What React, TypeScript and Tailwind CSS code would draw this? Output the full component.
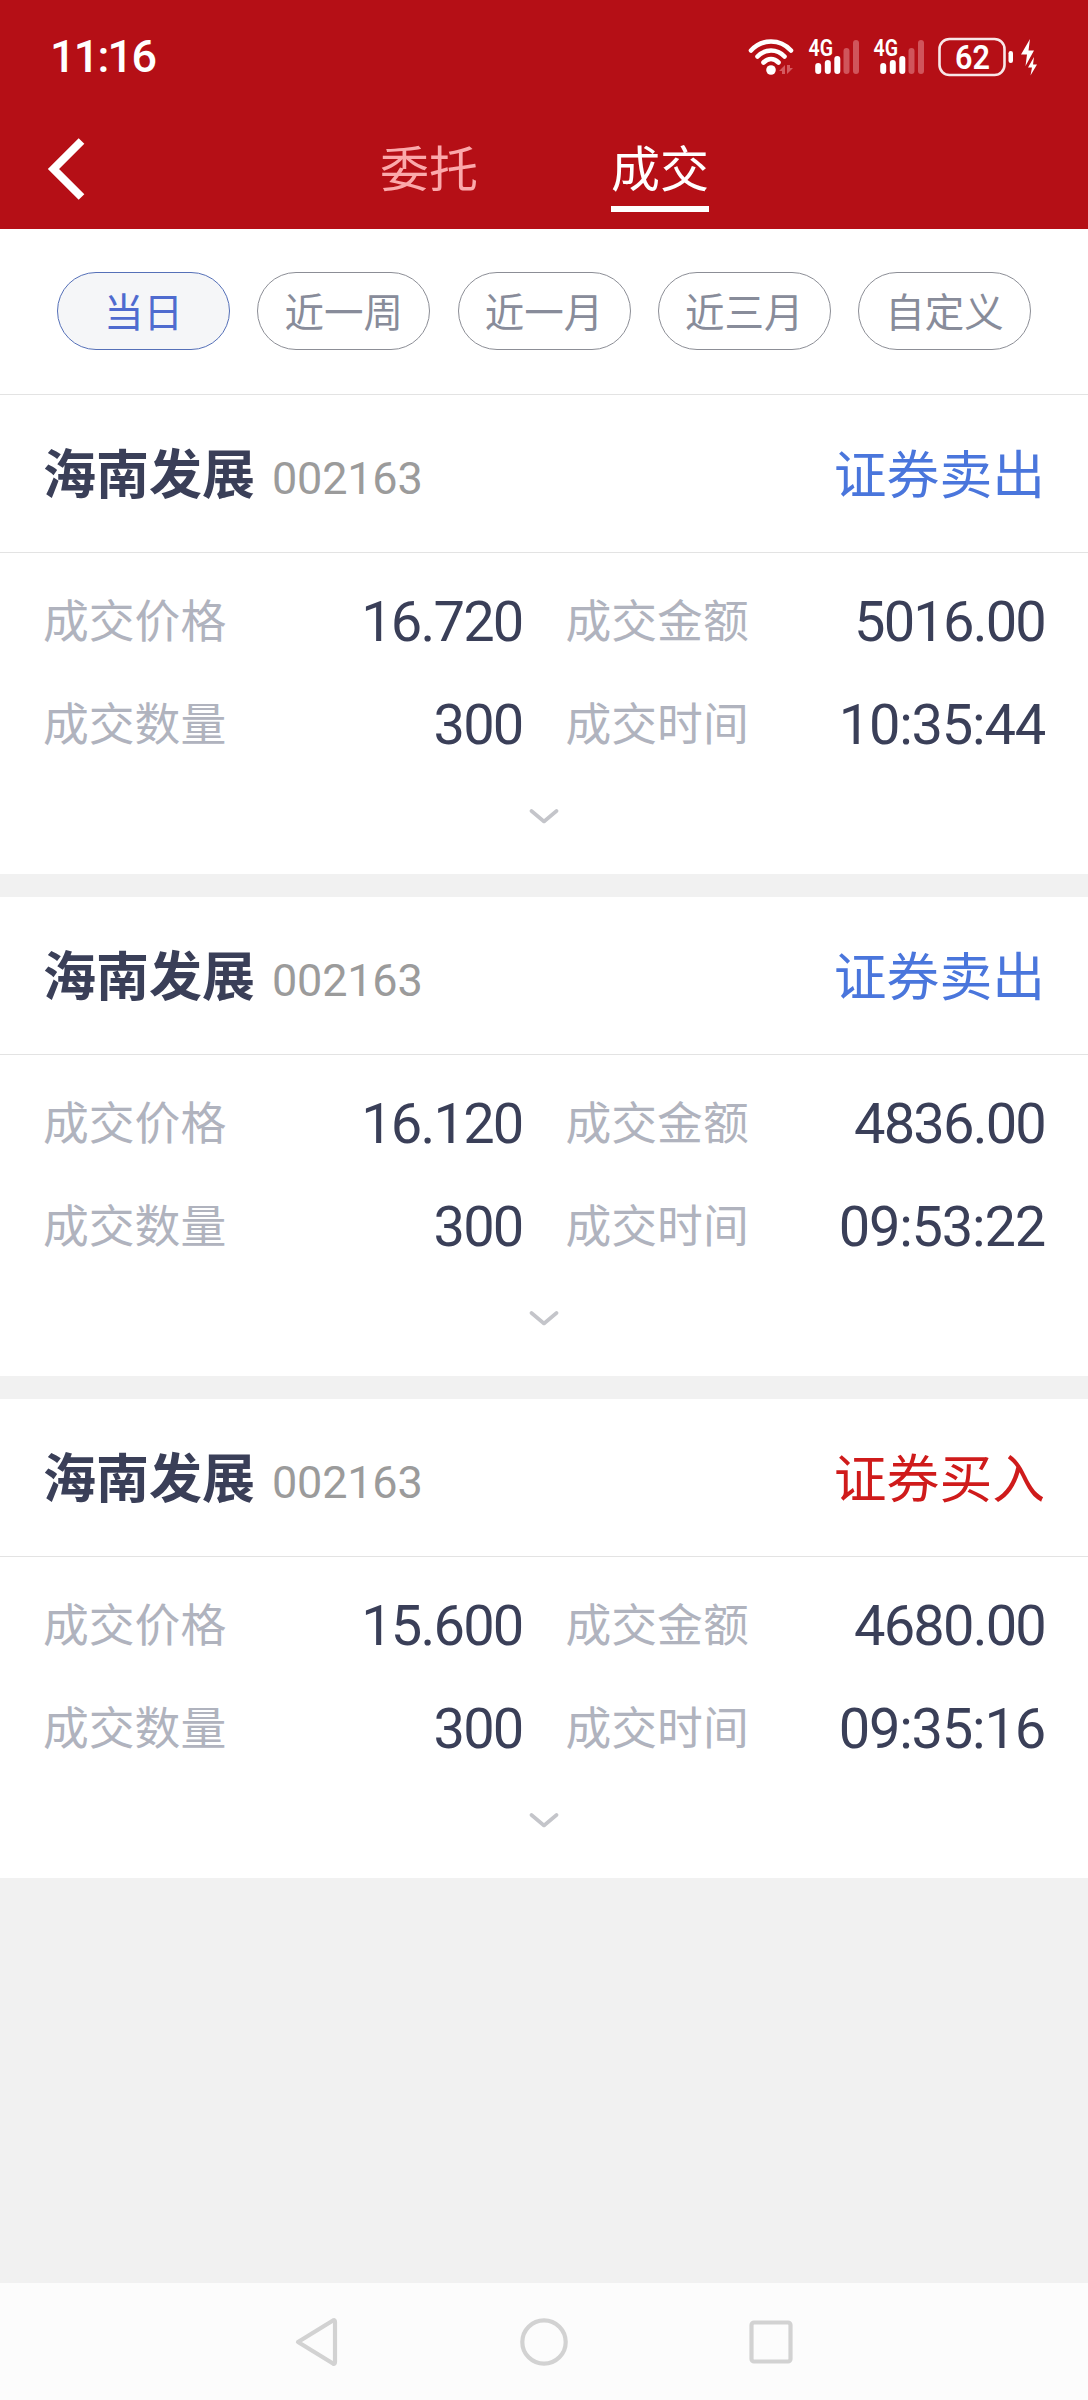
import { clsx } from 'clsx'
import { useState } from 'react'

type Deal = {
  id: number
  name: string
  code: string
  side: 'buy' | 'sell'
  price: string
  amount: string
  quantity: string
  time: string
}

const RANGES = ['当日', '近一周', '近一月', '近三月', '自定义']

const DEALS: Deal[] = [
  { id: 1, name: '海南发展', code: '002163', side: 'sell', price: '16.720', amount: '5016.00', quantity: '300', time: '10:35:44' },
  { id: 2, name: '海南发展', code: '002163', side: 'sell', price: '16.120', amount: '4836.00', quantity: '300', time: '09:53:22' },
  { id: 3, name: '海南发展', code: '002163', side: 'buy', price: '15.600', amount: '4680.00', quantity: '300', time: '09:35:16' },
]

function WifiIcon() {
  return (
    <svg width="46" height="38" viewBox="0 0 46 38" fill="none" stroke="#fff" strokeWidth="4.600" strokeLinecap="round">
      <path d="M3 12.500C14 0.500 32 0.500 43 12.500" />
      <path d="M9.500 18.500C17 10.500 29 10.500 36.500 18.500" />
      <path d="M15.500 24.500C20 20 26 20 30.500 24.500" />
      <circle cx="23" cy="32" r="4.800" fill="#fff" stroke="none" />
      <path d="M31 33l6-6v9h-3v-3zM45 30l-6 6v-9h3v3z" fill="#d45a60" stroke="none" />
    </svg>
  )
}

function SignalIcon() {
  return (
    <svg width="52" height="54" viewBox="0 -8 52 54">
      <text x="0.500" y="18" fill="#fff" fontSize="24" fontWeight="600" textLength="24.500" lengthAdjust="spacingAndGlyphs">4G</text>
      <g strokeWidth="6" strokeLinecap="round" stroke="#fff">
        <path d="M10.200 28v5" />
        <path d="M19.800 25v8" />
        <path d="M29.300 21v12" />
        <g stroke="#d0555b">
          <path d="M38.500 13v20" />
          <path d="M48 5v28" />
        </g>
      </g>
    </svg>
  )
}

function BatteryIcon() {
  return (
    <svg width="100" height="40" viewBox="0 0 100 40">
      <rect x="1.500" y="2" width="65" height="36" rx="10" fill="none" stroke="#fff" strokeOpacity=".9" strokeWidth="2.600" />
      <text x="34.500" y="31.500" fill="#fff" fontSize="33" fontWeight="600" textAnchor="middle" textLength="35" lengthAdjust="spacingAndGlyphs">62</text>
      <rect x="70.500" y="14" width="4.500" height="12" rx="2.200" fill="#fff" />
      <path d="M92 2L83 17.500h6L87.500 29 96 13.500h-5.500z" fill="#fff" />
      <path d="M96 20l-6 10.500h4L92.500 38.500 99 27.500h-4z" fill="#fff" />
    </svg>
  )
}

function StatusBar() {
  return (
    <div className="flex h-[110px] items-center justify-between pl-[50px] pr-[50px] pt-[3px]">
      <span className="text-[45px] font-medium leading-none tracking-[-1.800px] text-white">11:16</span>
      <div className="flex items-center">
        <WifiIcon />
        <div className="ml-[14px]"><SignalIcon /></div>
        <div className="ml-[13px]"><SignalIcon /></div>
        <div className="ml-[13px]"><BatteryIcon /></div>
      </div>
    </div>
  )
}

function Field({ label, value }: { label: string; value: string }) {
  return (
    <div className="flex h-[103px] items-center justify-between">
      <span className="pt-[3px] text-[45.800px] leading-none text-[#b0b3be]">{label}</span>
      <span className={clsx('text-[56px] leading-none text-[#3a3f58]', value.includes(':') ? 'tracking-[-1.200px]' : 'tracking-[-1.800px]')}>
        {value}
      </span>
    </div>
  )
}

function DealCard({ deal }: { deal: Deal }) {
  return (
    <div className="h-[479px] bg-white">
      <div className="flex h-[158px] items-center justify-between border-b border-[#e3e3e3] px-[43px] pt-[5px]">
        <div className="flex items-baseline">
          <span className="text-[53px] font-bold leading-none text-[#3a3f58]">{deal.name}</span>
          <span className="ml-[17px] text-[45px] leading-none tracking-[-0.200px] text-[#9b9b9b]">{deal.code}</span>
        </div>
        <span className={clsx('text-[52.800px] leading-none', deal.side === 'sell' ? 'text-[#4a76dc]' : 'text-[#cf1b1b]')}>
          {deal.side === 'sell' ? '证券卖出' : '证券买入'}
        </span>
      </div>

      <div className="grid grid-cols-2 gap-x-[43px] px-[43px] pt-[17px]">
        <Field label="成交价格" value={deal.price} />
        <Field label="成交金额" value={deal.amount} />
        <Field label="成交数量" value={deal.quantity} />
        <Field label="成交时间" value={deal.time} />
      </div>

      {/* Expand */}
      <div className="flex justify-center pt-[32px]">
        <svg width="30" height="18" viewBox="0 0 30 18" fill="none" stroke="#c4c5ca" strokeWidth="3.600" strokeLinecap="round" strokeLinejoin="round">
          <path d="M2.500 3L15 13.500 27.500 3" />
        </svg>
      </div>
    </div>
  )
}

export default function App() {
  const [range, setRange] = useState('当日')

  return (
    <div className="flex h-[2400px] w-[1088px] flex-col overflow-hidden bg-[#f1f1f1] font-[Roboto,'Noto_Sans_CJK_SC',sans-serif]">
      {/* Header */}
      <div className="h-[229px] bg-[#b50f16]">
        <StatusBar />
        <div className="flex h-[119px] items-start">
          <svg className="ml-[46px] mt-[27px]" width="40" height="64" viewBox="0 0 40 64" fill="none" stroke="#fff" strokeWidth="8">
            <path d="M35.500 4L7.500 32l28 28" />
          </svg>
          <div className="ml-[294px] mt-[36px] flex gap-[133px] text-[49px] leading-none">
            <span className="text-[#fba9ab]">委托</span>
            <span className="h-[66px] border-b-[6px] border-white text-white">成交</span>
          </div>
        </div>
      </div>

      {/* Date range */}
      <div className="flex h-[166px] justify-between border-b border-[#e3e3e3] bg-white px-[57px] pt-[43px]">
        {RANGES.map(r => (
          <button
            key={r}
            onClick={() => setRange(r)}
            className={clsx(
              'flex h-[78px] w-[173px] items-center justify-center rounded-full border pt-[5px] text-[39.500px] leading-none',
              r === range ? 'border-[#5570b8] bg-[#f5f6f8] text-[#4f6bcf]' : 'border-[#8c8e96] text-[#888c9a]'
            )}
          >
            {r}
          </button>
        ))}
      </div>

      {/* Deals */}
      <div className="flex flex-1 flex-col gap-[23px]">
        {DEALS.map(d => (
          <DealCard key={d.id} deal={d} />
        ))}
      </div>

      {/* System navigation */}
      <div className="flex h-[117px] items-center justify-between bg-[#fcfcfc] pl-[294px] pr-[294px]">
        <svg width="46" height="52" viewBox="0 0 46 52" fill="none" stroke="#d2d2d2" strokeWidth="4.200" strokeLinejoin="round">
          <path d="M4 26L39 4.500Q41 3.500 41 6V46Q41 48.500 39 47.500Z" />
        </svg>
        <svg width="52" height="52" viewBox="0 0 52 52" fill="none" stroke="#d2d2d2" strokeWidth="4.200">
          <circle cx="26" cy="26" r="21.700" />
        </svg>
        <svg width="46" height="46" viewBox="0 0 46 46" fill="none" stroke="#d2d2d2" strokeWidth="4.200">
          <rect x="3.500" y="3.500" width="39" height="39" rx="2.500" />
        </svg>
      </div>
    </div>
  )
}
